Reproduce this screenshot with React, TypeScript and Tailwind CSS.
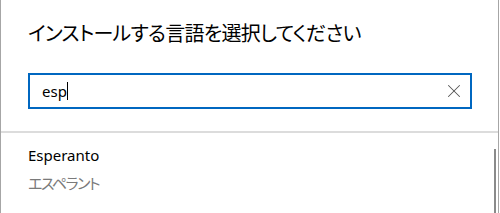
import { X } from "lucide-react";

export default function App() {
  return (
    <div className="w-[500px] h-[213px] bg-white overflow-hidden">
      <div
        className="relative w-[499px] h-[213px] border-l border-r border-[#a6a6a6] bg-white text-black"
        style={{ fontFamily: '"Noto Sans", "Noto Sans CJK JP", sans-serif' }}
      >
        <div className="px-[27px] pt-[20px]">
          <h1 className="text-[20px] leading-[28px] font-normal [font-feature-settings:'palt'] tracking-[-0.7px]">
            インストールする言語を選択してください
          </h1>
          <div className="mt-[25px] h-[36px] w-[444px] border-2 border-[#0067c0] flex items-center pl-[12px] pr-[5px]">
            <span className="text-[15px] leading-none">esp</span>
            <span className="w-px h-[18px] bg-black"></span>
            <div className="flex-1" />
            <X className="w-[22px] h-[22px] text-[#555]" strokeWidth={1.1} />
          </div>
        </div>
        <div className="mt-[22px] h-[2px] bg-[#dcdcdc]" />
        <div className="px-[27px] pt-[12px] flex flex-col gap-[8px]">
          <div className="text-[15px] leading-[20px]">Esperanto</div>
          <div className="text-[15px] leading-[20px] text-[#7a7a7a] [font-feature-settings:'palt'] tracking-[-1.5px]">エスペラント</div>
        </div>
        <div className="absolute left-[493px] top-[149px] w-[2px] h-[70px] bg-[#8a8a8a]" />
      </div>
    </div>
  );
}
